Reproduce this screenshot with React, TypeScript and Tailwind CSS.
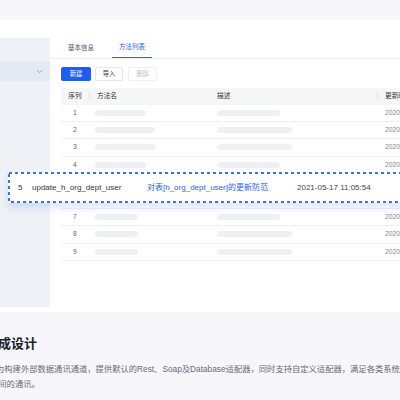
import React from 'react';
import { ChevronDown } from 'lucide-react';

const rows = [
  { id: 1, name: 51, desc: 63 },
  { id: 2, name: 60, desc: 75 },
  { id: 3, name: 60, desc: 75 },
  { id: 4, name: 51, desc: 63 },
  { id: 5, name: 51, desc: 63 },
  { id: 6, name: 51, desc: 63 },
  { id: 7, name: 43, desc: 63 },
  { id: 8, name: 43, desc: 75 },
  { id: 9, name: 43, desc: 75 },
];

const font = "font-['Liberation_Sans','Noto_Sans_CJK_SC',sans-serif]";

const App: React.FC = () => {
  return (
    <div className={`relative w-[400px] h-[400px] overflow-hidden bg-[#f7f7fb] ${font}`}>
      <div className="h-[20px]" />

      {/* main panel */}
      <div className="flex h-[292px] bg-white pt-[18px]">
        <div className="w-[50px] h-[269px] shrink-0 bg-[#eef2f6]">
          <div className="h-[24px]" />
          <div className="flex h-[19px] items-center justify-end pr-[6px] bg-[#e3eaf4]">
            <ChevronDown className="w-[9px] h-[9px] text-[#8c96a8]" strokeWidth={2} />
          </div>
        </div>

        <div className="flex-1 min-w-0">
          {/* tabs */}
          <div className="flex h-[20.5px] gap-[11px] pl-[11px] border-b border-[#eef0f3]">
            <div className="flex w-[40px] items-center justify-center text-[6.5px] text-[#4e5969]">
              基本信息
            </div>
            <div className="flex w-[40px] items-center justify-center text-[6.5px] text-[#2a62f0] border-b border-[#2a62f0]">
              方法列表
            </div>
          </div>

          {/* actions */}
          <div className="flex pl-[11px] mt-[8px]">
            <button className="w-[30px] h-[14px] rounded-[2px] bg-[#1d5cf5] text-white text-[6.3px]">新建</button>
            <button className="ml-[4px] w-[28px] h-[14px] rounded-[2px] border border-[#e5e6eb] bg-white text-[#333] text-[6.3px]">导入</button>
            <button className="ml-[5px] w-[29px] h-[14px] rounded-[2px] border border-[#eef0f3] bg-white text-[#c0c4cc] text-[6.3px]">删除</button>
          </div>

          {/* table */}
          <div className="ml-[11px] mt-[7px] w-[420px]">
            <div className="flex h-[17px] items-center bg-[#f5f6f8] text-[6.7px] text-[#333]">
              <div className="flex w-[28px] justify-center">序列</div>
              <div className="w-px h-[9px] bg-[#e3e5e8]" />
              <div className="w-[120px] pl-[7px]">方法名</div>
              <div className="w-[167px] pl-[7px]">描述</div>
              <div className="w-px h-[9px] bg-[#e3e5e8]" />
              <div className="pl-[7px] whitespace-nowrap">更新时间</div>
            </div>
            {rows.map((r) => (
              <div key={r.id} className="flex h-[17.4px] items-center border-b border-[#eef0f3] text-[6.8px]">
                <div className="flex w-[28px] justify-center text-[#666]">{r.id}</div>
                <div className="w-[121px] pl-[6px]">
                  <div className="h-[6px] rounded-full bg-[#eff0f3]" style={{ width: r.name }} />
                </div>
                <div className="w-[167px] pl-[7px]">
                  <div className="h-[6px] rounded-full bg-[#eff0f3]" style={{ width: r.desc }} />
                </div>
                <div className="pl-[8px] text-[#888] whitespace-nowrap">2020-04-29 10:21:33</div>
              </div>
            ))}
          </div>
        </div>
      </div>

      {/* highlighted row */}
      <div className="absolute left-[8px] top-[172px] w-[500px] h-[31px] bg-white shadow-[0_5px_7px_rgba(59,111,247,0.16)]">
        <svg className="absolute left-0 top-0" width="500" height="31">
          <rect x="1" y="1" width="540" height="29" fill="none" stroke="#3a6ff7" strokeWidth="2" strokeDasharray="3 3" />
        </svg>
        <div className="relative flex h-full items-center text-[8px] whitespace-nowrap">
          <span className="w-[24px] pl-[10px] text-[#333]">5</span>
          <span className="w-[115px] text-[#333]">update_h_org_dept_user</span>
          <span className="w-[150px] text-[#2a62f0]">对表[h_org_dept_user]的更新防范</span>
          <span className="text-[#444]">2021-05-17 11:05:54</span>
        </div>
      </div>

      {/* bottom section */}
      <div className="pt-[23px]">
        <div className="ml-[-15px] h-[18px] leading-[18px] text-[13px] font-bold text-[#1d2129] whitespace-nowrap">
          集成设计
        </div>
        <div className="mt-[9px] text-[8.3px] leading-[15px] text-[#666a75] whitespace-nowrap">
          <div className="ml-[-4px]">为构建外部数据通讯通道，提供默认的Rest、Soap及Database适配器，同时支持自定义适配器，满足各类系统</div>
          <div className="ml-[-10px]">之间的通讯。</div>
        </div>
      </div>
    </div>
  );
};

export default App;
